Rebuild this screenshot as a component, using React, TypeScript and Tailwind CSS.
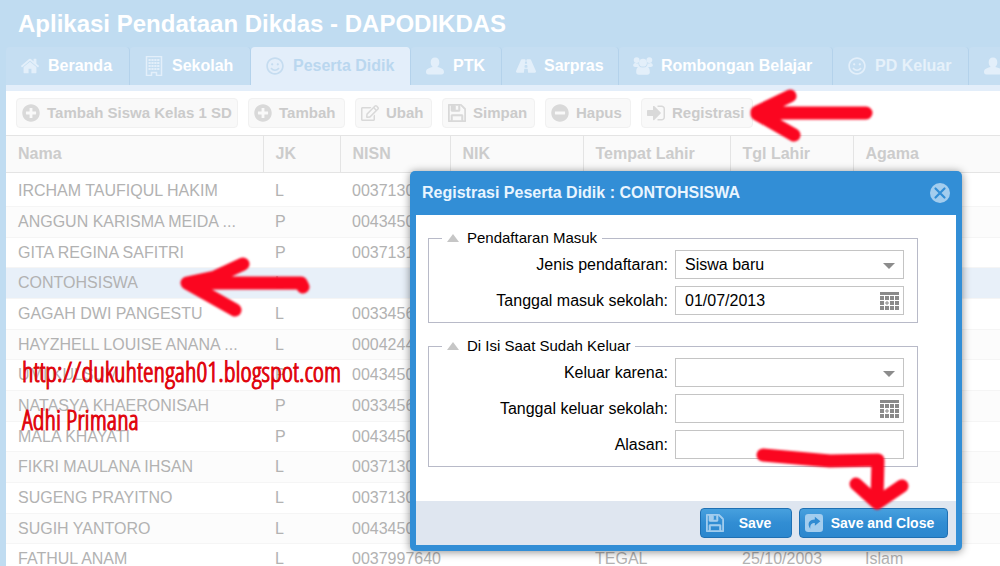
import React from 'react';
import { FaMinusCircle, FaPlusCircle, FaRegEdit, FaRegSmile, FaRoad } from 'react-icons/fa';

interface IconProps {
  className?: string;
}

const HomeIcon: React.FC<IconProps> = ({ className }) => (
  <svg viewBox="0 0 1792 1792" fill="currentColor" className={className}>
    <path d="M1472 992v480q0 26-19 45t-45 19h-384v-384h-256v384h-384q-26 0-45-19t-19-45v-480q0-1 .5-3t.5-3l575-474 575 474q1 2 1 6zm223-69l-62 74q-8 9-21 11h-3q-13 0-21-7l-692-577-692 577q-12 8-24 7-13-2-21-11l-62-74q-8-10-7-23.5t11-21.5l719-599q32-26 76-26t76 26l244 204v-195q0-14 9-23t23-9h192q14 0 23 9t9 23v408l219 182q10 8 11 21.5t-7 23.5z" />
  </svg>
);

const BuildingIcon: React.FC<IconProps> = ({ className }) => (
  <svg viewBox="0 0 18 20" fill="none" className={className}>
    <path d="M1.5 0.5h15v19h-5v-3h-5v3h-5z" stroke="currentColor" strokeWidth="1.5" />
    <path d="M3.500 4h11M3.500 7h11M3.500 10h11M3.500 13h11" stroke="currentColor" strokeWidth="2" strokeDasharray="2.200 0.700" />
  </svg>
);

const UserIcon: React.FC<IconProps> = ({ className }) => (
  <svg viewBox="0 0 18 18" fill="currentColor" className={className}>
    <path d="M9 0.500c2.700 0 4.300 2 4.300 4.700 0 1.900-.8 3.800-2 4.700 3.700.9 6.700 2 6.700 5.100 0 1.600-.9 2.500-2.300 2.500H2.300C.9 17.500 0 16.600 0 15c0-3.100 3-4.200 6.700-5.100-1.200-.9-2-2.800-2-4.700C4.700 2.500 6.300.5 9 .5z" />
  </svg>
);

const GroupIcon: React.FC<IconProps> = ({ className }) => (
  <svg viewBox="0 0 22 20" fill="currentColor" className={className}>
    <circle cx="4" cy="3.500" r="3.200" />
    <circle cx="18" cy="3.500" r="3.200" />
    <circle cx="11" cy="6.300" r="4.300" />
    <path d="M2.500 6.700c1 .6 2.400.6 3.500.2 0 1.900.7 3.300 2 4.300H2.500C1 11.200.2 10.500.2 9.300c0-1.200.8-2.200 2.300-2.600zM19.500 6.700c-1 .6-2.400.6-3.500.2 0 1.900-.7 3.300-2 4.300h5.500c1.500 0 2.300-.7 2.300-1.900 0-1.200-.8-2.200-2.300-2.600z" />
    <path d="M6.500 10.500c2.600 1.600 6.400 1.600 9 0 2.200.6 3 3 3 6 0 2-1 3-2.800 3H6.300c-1.800 0-2.800-1-2.800-3 0-3 .8-5.400 3-6z" />
  </svg>
);

const SaveIcon: React.FC<IconProps> = ({ className }) => (
  <svg viewBox="128 128 1536 1536" fill="currentColor" stroke="currentColor" strokeWidth="50" className={className}>
    <path d="M512 1536h768v-384h-768v384zm896 0h128v-896q0-14-10-38.5t-20-34.5l-281-281q-10-10-34-20t-39-10v416q0 40-28 68t-68 28h-576q-40 0-68-28t-28-68v-416h-128v1280h128v-416q0-40 28-68t68-28h832q40 0 68 28t28 68v416zm-384-928v-320q0-13-9.5-22.5t-22.5-9.5h-192q-13 0-22.5 9.5t-9.5 22.5v320q0 13 9.5 22.5t22.5 9.5h192q13 0 22.5-9.5t9.5-22.5zm640 32v928q0 40-28 68t-68 28h-1344q-40 0-68-28t-28-68v-1344q0-40 28-68t68-28h928q40 0 88 20t76 48l280 280q28 28 48 76t20 88z" />
  </svg>
);

const SignInIcon: React.FC<IconProps> = ({ className }) => (
  <svg viewBox="128 128 1536 1536" fill="currentColor" className={className}>
    <path d="M1312 896q0 26-19 45l-544 544q-19 19-45 19t-45-19-19-45v-288h-448q-26 0-45-19t-19-45v-384q0-26 19-45t45-19h448v-288q0-26 19-45t45-19 45 19l544 544q19 19 19 45zm352-352v704q0 119-84.5 203.5t-203.5 84.5h-320q-13 0-22.5-9.5t-9.5-22.5q0-4-1-20t-.5-26.5 3-23.5 10-19.5 20.5-6.5h320q66 0 113-47t47-113v-704q0-66-47-113t-113-47h-312l-11.5-1-11.5-3-8-5.5-7-9-2-13.5q0-4-1-20t-.5-26.5 3-23.5 10-19.5 20.5-6.5h320q119 0 203.5 84.5t84.5 203.5z" />
  </svg>
);

const ShareIcon: React.FC<IconProps> = ({ className }) => (
  <svg viewBox="0 0 17 17" className={className}>
    <rect width="17" height="17" rx="3" fill="currentColor" />
    <path d="M9.3 2.6l5.2 4.2-5.2 4.2v-2.5c-3 0-4.600 1.300-4.300 5.400-3.200-4.600-1.300-8.700 4.300-8.800z" fill="#2f8bd2" />
  </svg>
);

const CalendarIcon: React.FC<IconProps> = ({ className }) => (
  <svg viewBox="0 0 19 18" fill="#8a8a8a" className={className}>
    <path d="M0 0h19v3H0z" />
    {[4, 9, 14].map((y) =>
      [0, 5, 10, 15].map((x) =>
        x === 5 && y === 9 ? (
          <path key="today" d="M6.500 9h1v1.500h1.500v1h-1.500V13h-1v-1.500H5v-1h1.500z" />
        ) : (
          <rect key={`${x}-${y}`} x={x} y={y} width="4" height="4" />
        )
      )
    )}
  </svg>
);

const tabs = [
  { id: 'beranda', label: 'Beranda', icon: <HomeIcon className="size-5" />, width: 'w-[124px]' },
  { id: 'sekolah', label: 'Sekolah', icon: <BuildingIcon className="h-5 w-[18px]" />, width: 'w-[121px]' },
  { id: 'pd', label: 'Peserta Didik', icon: <FaRegSmile className="size-[18px]" />, width: 'w-[160px]', active: true },
  { id: 'ptk', label: 'PTK', icon: <UserIcon className="size-[18px]" />, width: 'w-[91px]' },
  { id: 'sarpras', label: 'Sarpras', icon: <FaRoad className="size-5" />, width: 'w-[117px]' },
  { id: 'rombel', label: 'Rombongan Belajar', icon: <GroupIcon className="h-5 w-[22px]" />, width: 'w-[214px]' },
  { id: 'pd-keluar', label: 'PD Keluar', icon: <FaRegSmile className="size-[18px]" />, width: 'w-[136px]', faded: true },
  { id: 'ptk-keluar', label: '', icon: <UserIcon className="size-[18px]" />, width: 'w-[146px]' },
];

const tools = [
  { label: 'Tambah Siswa Kelas 1 SD', icon: <FaPlusCircle className="size-[18px]" />, width: 'w-[222px]' },
  { label: 'Tambah', icon: <FaPlusCircle className="size-[18px]" />, width: 'w-[97px]' },
  { label: 'Ubah', icon: <FaRegEdit className="size-[18px]" />, width: 'w-[77px]' },
  { label: 'Simpan', icon: <SaveIcon className="size-[18px]" />, width: 'w-[93px]' },
  { label: 'Hapus', icon: <FaMinusCircle className="size-[18px]" />, width: 'w-[86px]' },
  { label: 'Registrasi', icon: <SignInIcon className="size-[18px]" />, width: 'w-[112px]' },
];

const columns = [
  { label: 'Nama', width: 'w-[257px]' },
  { label: 'JK', width: 'w-[77px]' },
  { label: 'NISN', width: 'w-[110px]' },
  { label: 'NIK', width: 'w-[133px]' },
  { label: 'Tempat Lahir', width: 'w-[147px]' },
  { label: 'Tgl Lahir', width: 'w-[123px]' },
  { label: 'Agama', width: 'w-auto' },
];

const students = [
  ['IRCHAM TAUFIQUL HAKIM', 'L', '0037130', '', '', '', ''],
  ['ANGGUN KARISMA MEIDA ...', 'P', '0043450', '', '', '', ''],
  ['GITA REGINA SAFITRI', 'P', '0037131', '', '', '', ''],
  ['CONTOHSISWA', 'L', '', '', '', '', ''],
  ['GAGAH DWI PANGESTU', 'L', '0033456', '', '', '', ''],
  ['HAYZHELL LOUISE ANANA ...', 'L', '0004244', '', '', '', ''],
  ['UMI KULSUM', 'P', '0043450', '', '', '', ''],
  ['NATASYA KHAERONISAH', 'P', '0033456', '', '', '', ''],
  ['MALA KHAYATI', 'P', '0043450', '', '', '', ''],
  ['FIKRI MAULANA IHSAN', 'L', '0037130', '', '', '', ''],
  ['SUGENG PRAYITNO', 'L', '0037130', '', '', '', ''],
  ['SUGIH YANTORO', 'L', '0043450', '', '', '', ''],
  ['FATHUL ANAM', 'L', '0037997640', '', 'TEGAL', '25/10/2003', 'Islam'],
];

const StudentTable = () => (
  <table className="w-full table-fixed border-collapse text-base text-[#b2b2b2]">
    <thead>
      <tr className="h-[37px] border-y border-[#e4e4e4] bg-[#fafafa] text-[#cccccc]">
        {columns.map((col) => (
          <th key={col.label} className={`${col.width} border-r border-[#e4e4e4] px-3 text-left font-bold last:border-r-0`}>
            {col.label}
          </th>
        ))}
      </tr>
    </thead>
    <tbody className="before:table-row before:h-[3px] before:content-['']">
      {students.map((row) => (
        <tr
          key={row[0]}
          className={`h-[31px] border-b border-[#f5f5f5] nth-[3n]:h-[30px] ${row[0] === 'CONTOHSISWA' ? 'bg-[#e8f0f9]' : 'even:bg-[#fcfcfc]'}`}
        >
          {row.map((cell, i) => (
            <td key={i} className="px-3 leading-5 whitespace-nowrap">
              {cell}
            </td>
          ))}
        </tr>
      ))}
    </tbody>
  </table>
);

interface FieldProps {
  id: string;
  label: string;
  value?: string;
  kind: 'select' | 'date' | 'text';
}

const Field: React.FC<FieldProps> = ({ id, label, value = '', kind }) => (
  <div className="flex items-center gap-[7px]">
    <label htmlFor={id} className="flex-1 text-right">
      {label}
    </label>
    <div className="relative flex h-[29px] w-[229px] border border-[#c4c4c4] bg-white">
      {kind === 'select' ? (
        <>
          <select id={id} defaultValue={value} className="w-full appearance-none bg-transparent px-[9px] outline-none">
            <option value={value}>{value}</option>
          </select>
          <svg viewBox="0 0 12 6" className="pointer-events-none absolute top-3 right-2 h-1.5 w-3">
            <path d="M0 0h12L6 6z" fill="#8c8c8c" />
          </svg>
        </>
      ) : (
        <input id={id} type="text" defaultValue={value} className="w-full min-w-0 bg-transparent px-[9px] outline-none" />
      )}
      {kind === 'date' && (
        <button type="button" aria-label="Pilih tanggal" className="shrink-0 pr-1">
          <CalendarIcon className="h-[18px] w-[19px]" />
        </button>
      )}
    </div>
  </div>
);

const FieldGroup: React.FC<{ title: string; children: React.ReactNode }> = ({ title, children }) => (
  <fieldset className="border border-[#b8bac8] px-[13px] pb-[7px]">
    <legend className="flex h-5 items-center gap-2 px-[5px] text-[15px]">
      <svg viewBox="0 0 12 8" className="h-2 w-3">
        <path d="M6 0l6 8H0z" fill="#c6c6c6" />
      </svg>
      {title}
    </legend>
    <div className="flex flex-col gap-[7px] pt-0.5">{children}</div>
  </fieldset>
);

const actionClass =
  'flex h-[30px] items-center rounded-sm border border-[#1f70b3] bg-linear-to-b from-[#47a0de] via-[#318dd3] to-[#2b87ce] px-[5px] text-sm font-bold text-white';

const RegistrationDialog = () => (
  <form
    role="dialog"
    aria-labelledby="dialog-title"
    className="absolute top-[171px] right-[38px] w-[552px] rounded-[5px] bg-[#328ed6] px-[6px] pb-[6px] text-base text-black shadow-[0_1px_8px_rgba(0,0,0,0.45)]"
  >
    <header className="flex h-11 items-center justify-between px-[6px]">
      <h2 id="dialog-title" className="font-bold text-[#e9f5ff]">
        Registrasi Peserta Didik : CONTOHSISWA
      </h2>
      <button type="button" aria-label="Tutup">
        <svg viewBox="0 0 20 20" className="size-5">
          <circle cx="10" cy="10" r="10" fill="#a3cdee" />
          <path d="M5.500 5.500l9 9M14.500 5.500l-9 9" stroke="#328ed6" strokeWidth="2.200" strokeLinecap="round" />
        </svg>
      </button>
    </header>
    <div className="flex flex-col gap-[13px] bg-white pt-[13px] pr-[38px] pb-[34px] pl-3">
      <FieldGroup title="Pendaftaran Masuk">
        <Field id="jenis" label="Jenis pendaftaran:" value="Siswa baru" kind="select" />
        <Field id="tgl-masuk" label="Tanggal masuk sekolah:" value="01/07/2013" kind="date" />
      </FieldGroup>
      <FieldGroup title="Di Isi Saat Sudah Keluar">
        <Field id="keluar" label="Keluar karena:" kind="select" />
        <Field id="tgl-keluar" label="Tanggal keluar sekolah:" kind="date" />
        <Field id="alasan" label="Alasan:" kind="text" />
      </FieldGroup>
    </div>
    <footer className="flex justify-end gap-[7px] bg-[#dfe6f0] px-2 py-[7px]">
      <button type="button" className={`${actionClass} w-[92px]`}>
        <SaveIcon className="size-[18px] text-[#a3cdee]" />
        <span className="flex-1 text-center">Save</span>
      </button>
      <button type="button" className={`${actionClass} w-[149px]`}>
        <ShareIcon className="size-[18px] text-[#a3cdee]" />
        <span className="flex-1 text-center">Save and Close</span>
      </button>
    </footer>
  </form>
);

// Hand-drawn marker arrows, each one a brush stroke
const Arrow: React.FC<{ d: string; viewBox: string; className: string }> = ({ d, viewBox, className }) => (
  <svg viewBox={viewBox} className={`pointer-events-none absolute blur-[1px] ${className}`}>
    <path d={d} fill="none" stroke="#fb0620" strokeWidth="13" strokeLinecap="round" strokeLinejoin="round" />
  </svg>
);

const App = () => {
  return (
    <div className="relative flex h-screen flex-col overflow-hidden bg-[#c0dcf1] pl-[6px] font-['Liberation_Sans',Arial,sans-serif]">
      <header className="flex h-[47px] shrink-0 items-center pl-3">
        <h1 className="text-2xl font-bold text-white">Aplikasi Pendataan Dikdas - DAPODIKDAS</h1>
      </header>

      <nav className="flex h-11 shrink-0 overflow-hidden border-b-[6px] border-[#e3eefa] text-base font-bold">
        {tabs.map((tab) => (
          <button
            key={tab.id}
            aria-label={tab.label || 'PTK Keluar'}
            className={`flex shrink-0 items-center gap-2 rounded-t-sm border-r border-[#b4d2eb] pl-[14px] ${tab.width} ${
              tab.active ? 'bg-[#e3eefa] text-[#bad7ef]' : tab.faded ? 'bg-[#c5def2] text-[#e6f1fa]' : 'bg-[#c5def2] text-white'
            }`}
          >
            <span className={`flex w-5 justify-center ${tab.active ? 'text-[#c5dcf0]' : 'text-[#e3effa]'}`}>{tab.icon}</span>
            {tab.label}
          </button>
        ))}
      </nav>

      <main className="flex-1 overflow-hidden bg-white">
        <div className="flex gap-[10px] px-[10px] py-[7px]">
          {tools.map((tool) => (
            <button
              key={tool.label}
              className={`flex h-[30px] shrink-0 items-center gap-[7px] rounded-sm border border-[#f1f1f1] bg-[#f9f9f9] pl-[5px] text-[15px] font-bold whitespace-nowrap text-[#cbcbcb] ${tool.width}`}
            >
              <span className="text-[#d9d9d9]">{tool.icon}</span>
              {tool.label}
            </button>
          ))}
        </div>
        <StudentTable />
      </main>

      <div className="absolute top-[354px] left-[22px] font-['Open_Sans_Condensed_Light','Open_Sans_Condensed',sans-serif] text-[27px] leading-[36px] text-[#e0040c] [-webkit-text-stroke:1px]">
        <p className="h-12">http://dukuhtengah01.blogspot.com</p>
        <p>Adhi Primana</p>
      </div>

      <RegistrationDialog />

      <Arrow viewBox="740 80 145 70" className="top-[80px] left-[740px] h-[70px] w-[145px]" d="M866 113H768M790 96L757 112M757 114L794 135M757 113L775 117" />
      <Arrow viewBox="170 250 150 75" className="top-[250px] left-[170px] h-[75px] w-[150px]" d="M303 287L301 283H187M243 264L215 277L187 283L235 310" />
      <Arrow viewBox="750 440 170 80" className="top-[440px] left-[750px] h-[80px] w-[170px]" d="M763 455L830 461L878 460L877 500M856 484L877 503L902 486" />
    </div>
  );
};

export default App;
